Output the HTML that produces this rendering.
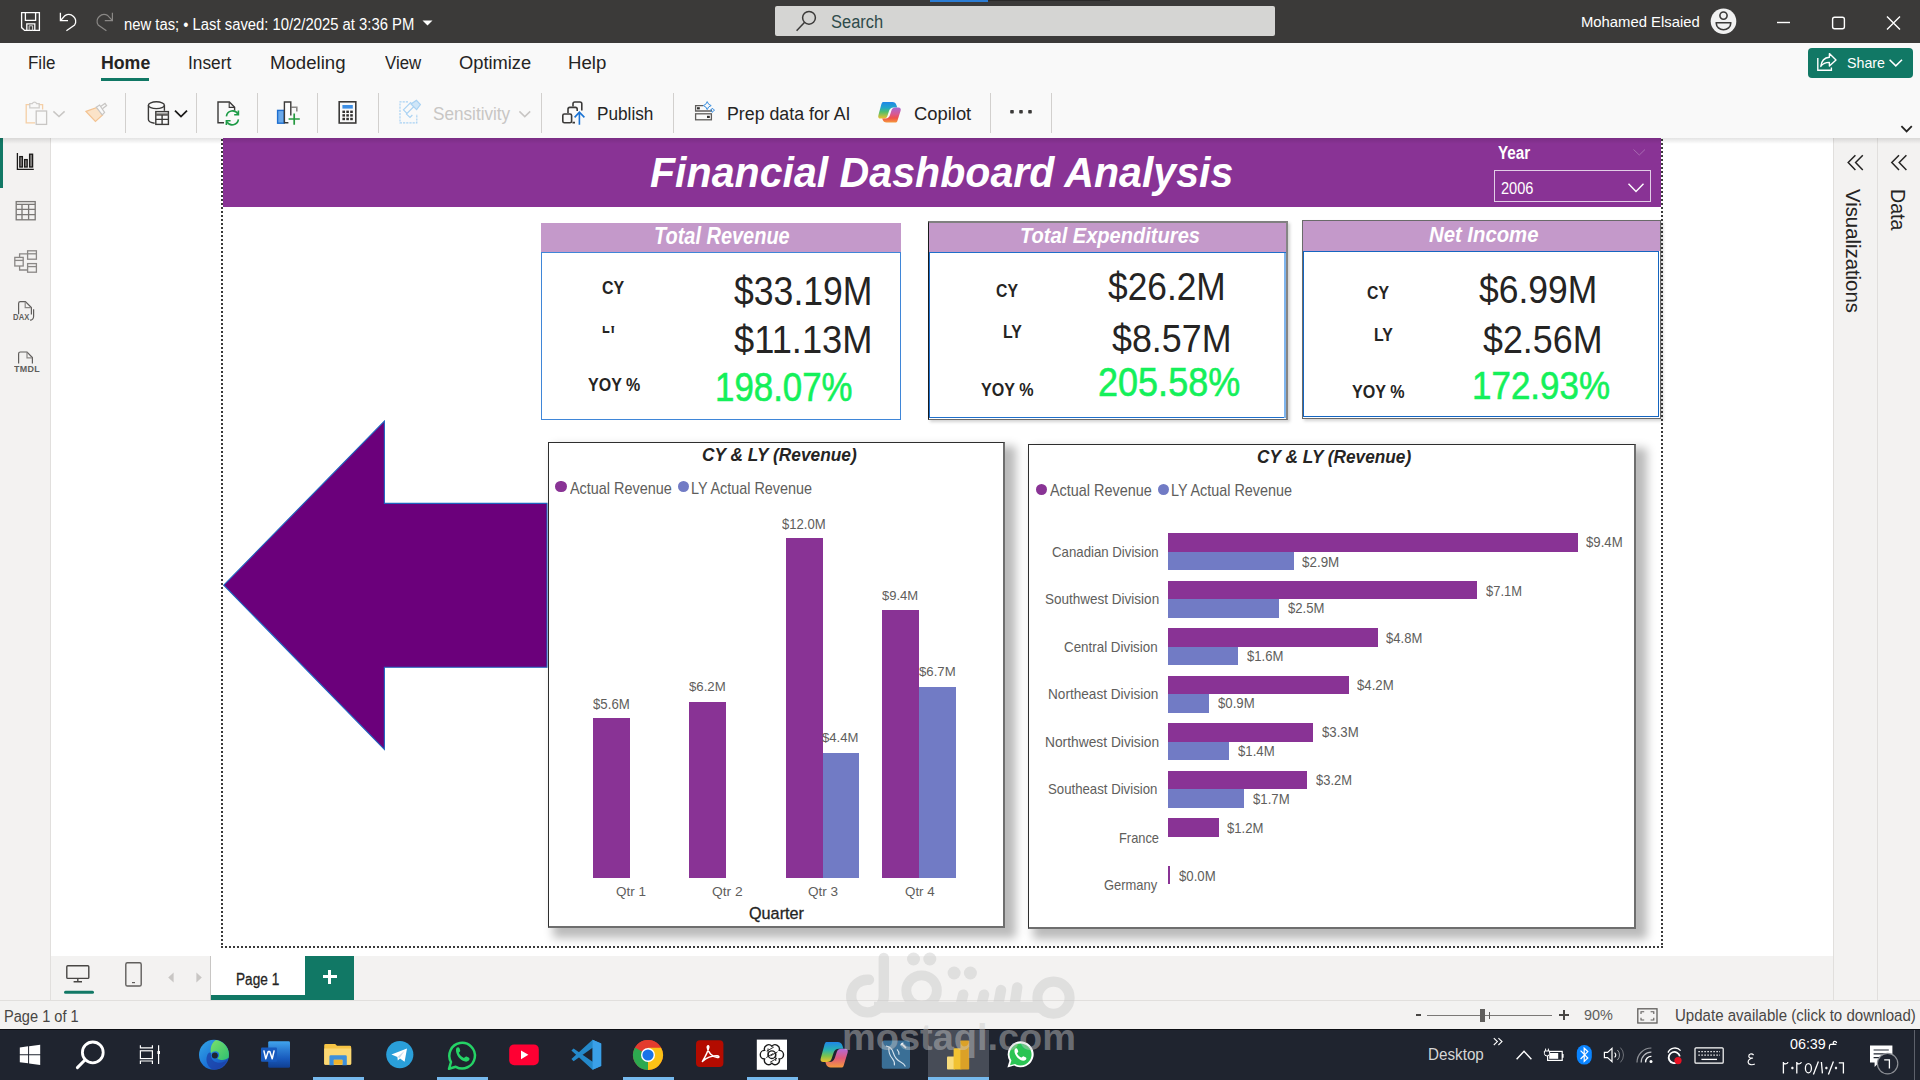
<!DOCTYPE html>
<html lang="en">
<head>
<meta charset="utf-8">
<title>Financial Dashboard Analysis - Power BI Desktop</title>
<style>
html,body{margin:0;padding:0}
body{width:1920px;height:1080px;overflow:hidden;position:relative;background:#fff;font-family:"Liberation Sans",sans-serif}
.a{position:absolute}
.t{position:absolute;white-space:nowrap;line-height:1;transform-origin:0 0;display:block}
svg{position:absolute;overflow:visible}
.sep{position:absolute;top:93px;width:1px;height:40px;background:#d2d0ce}
.bar1{position:absolute;background:#893395}
.bar2{position:absolute;background:#717bc5}
</style>
</head>
<body>

<!-- ===== TITLE BAR ===== -->
<div class="a" id="titlebar" style="left:0;top:0;width:1920px;height:43px;background:#3b3a39"></div>
<div class="a" style="left:930px;top:0;width:58px;height:2px;background:#2b7cd3"></div>
<div class="a" style="left:988px;top:0;width:122px;height:1px;background:#2a2928"></div>
<div class="a" id="searchbox" style="left:775px;top:6px;width:500px;height:30px;background:#d5d5d3;border-radius:2px"></div>
<!--ICONS_TITLE_START--><!-- title bar icons -->
<svg style="left:0;top:0" width="1920" height="43" fill="none" stroke="#fff" stroke-width="1.3">
 <!-- save -->
 <path d="M21.6 12.7 H39.4 V30.4 H24.6 L21.6 27.6 Z"/>
 <path d="M25.4 12.7 V20.3 H35.6 V12.7"/>
 <path d="M26.8 30.4 V23.8 H34.8 V30.4"/>
 <path d="M29.2 30.4 V25.8 H32.6 V30.4" stroke="#d0d0d0" stroke-width="1"/>
 <!-- undo -->
 <path d="M60.4 12.8 V20.6 H68"/>
 <path d="M60.8 20.2 L65 15.6 A6.9 6.9 0 0 1 74.6 25.0 L66.4 30.8"/>
 <!-- redo -->
 <g stroke="#8a8886" stroke-width="1.2">
 <path d="M112.4 12.8 V20.6 H104.8"/>
 <path d="M112 20.2 L107.8 15.6 A6.9 6.9 0 0 0 98.2 25.0 L106.4 30.8"/>
 </g>
 <!-- dropdown caret -->
 <path d="M422.5 20.6 H432.5 L427.5 25.4 Z" fill="#fff" stroke="none"/>
 <!-- search magnifier -->
 <g stroke="#3b3a39" stroke-width="1.5">
 <circle cx="809" cy="17.8" r="6.4"/>
 <path d="M804.4 22.6 L796.6 30.8"/>
 </g>
 <!-- avatar -->
 <circle cx="1723.5" cy="21.3" r="12.8" fill="#f1f1f1" stroke="none"/>
 <g stroke="#3b3a39" stroke-width="1.6">
 <circle cx="1723.5" cy="15.6" r="3.6"/>
 <path d="M1716.3 22.8 H1730.7 V23.6 A7.2 6.2 0 0 1 1716.3 23.6 Z"/>
 </g>
 <!-- window controls -->
 <path d="M1777 22.5 H1790" stroke-width="1.4"/>
 <rect x="1832.6" y="17.2" width="11.8" height="11.6" rx="2" stroke-width="1.4"/>
 <path d="M1887 16.4 L1900 29.6 M1900 16.4 L1887 29.6" stroke-width="1.4"/>
</svg>
<!--ICONS_TITLE_END-->

<!-- ===== MENU + RIBBON ===== -->
<div class="a" id="ribbon" style="left:0;top:43px;width:1920px;height:95px;background:#f9f9f9"></div>
<div class="a" style="left:101px;top:78px;width:48px;height:3px;background:#117865"></div>
<div class="sep" style="left:125px"></div>
<div class="sep" style="left:196px"></div>
<div class="sep" style="left:257px"></div>
<div class="sep" style="left:317px"></div>
<div class="sep" style="left:378px"></div>
<div class="sep" style="left:541px"></div>
<div class="sep" style="left:673px"></div>
<div class="sep" style="left:990px"></div>
<div class="sep" style="left:1051px"></div>
<div class="a" id="share" style="left:1808px;top:48px;width:105px;height:30px;background:#117865;border-radius:4px"></div>
<!--ICONS_RIBBON_START--><!-- ribbon icons -->
<svg style="left:0;top:43px" width="1920" height="95" viewBox="0 43 1920 95" fill="none">
 <!-- share icon + chevron -->
 <g stroke="#fff" stroke-width="1.4">
  <path d="M1817.8 58 V70.2 H1831.4 V67.6"/>
  <path d="M1829.4 53.6 L1836 59.9 L1829.4 66 V62.4 C1825.4 62.4 1822.6 63.8 1820.8 66.4 C1821.4 61 1824.6 57.6 1829.4 57.2 Z" stroke-linejoin="round"/>
  <path d="M1889.6 59.8 L1895.8 65.8 L1902 59.8" stroke-width="1.6"/>
 </g>
 <!-- collapse ribbon chevron -->
 <path d="M1901.4 126.2 L1906.6 131.4 L1911.8 126.2" stroke="#252423" stroke-width="1.8"/>
 <!-- paste (disabled) -->
 <g stroke-width="1.3">
  <path d="M30 104.6 H26.2 V122.8 H35" stroke="#f5cfa6"/>
  <path d="M38.8 104.6 H42.6 V109.6" stroke="#f5cfa6"/>
  <path d="M29.8 107.8 V103.6 H32.4 A2.2 2.2 0 0 1 36.6 103.6 H39.2 V107.8 Z" stroke="#d0cecc"/>
  <rect x="36.2" y="111" width="10.4" height="13.4" stroke="#c8c6c4" fill="#f9f9f9"/>
  <path d="M53.4 111.4 L59 116.6 L64.6 111.4" stroke="#c8c6c4" stroke-width="1.5"/>
 </g>
 <!-- format painter (disabled) -->
 <g stroke-width="1.2">
  <path d="M86 111.4 L97 107.4 L102.6 115 L95.4 121.4 Z" fill="#fbe3c8" stroke="#f3c392"/>
  <path d="M96.2 107.2 L99.6 105 L104.6 112.4 L102.2 114.8 Z" fill="#f9f9f9" stroke="#c8c6c4"/>
  <path d="M100.6 106.4 L105 103.4 L106.6 105.6 L102.4 108.8" stroke="#c8c6c4"/>
 </g>
 <!-- get data -->
 <g stroke="#3b3a39" stroke-width="1.4">
  <ellipse cx="156.4" cy="105.2" rx="8" ry="3.4"/>
  <path d="M148.4 105.2 V119.6 C148.4 121.6 150.8 122.8 154.6 123.2"/>
  <path d="M164.4 105.2 V110.8"/>
  <rect x="155.8" y="111.6" width="12.6" height="12.8" fill="#f9f9f9"/>
  <path d="M155.8 114.6 H168.4" stroke-width="2.4" stroke="#605e5c"/>
  <path d="M155.8 119.4 H168.4 M162.1 115 V124.4"/>
  <path d="M175 110.6 L181 116.6 L187 110.6" stroke="#1b1a19" stroke-width="1.8"/>
 </g>
 <!-- refresh -->
 <g stroke-width="1.4">
  <path d="M224 122.8 H218 V102 H229.4 L234.6 107.2 V110.6" stroke="#3b3a39"/>
  <path d="M229.2 102.2 V107.4 H234.4" stroke="#3b3a39" stroke-width="1.1"/>
  <path d="M226.4 116.4 A6.2 6.2 0 0 1 238 114.2" stroke="#1d9b46" stroke-width="1.6"/>
  <path d="M238.4 110.6 V114.8 H234.2" stroke="#1d9b46" stroke-width="1.6"/>
  <path d="M238.4 119.4 A6.2 6.2 0 0 1 226.8 121.6" stroke="#1d9b46" stroke-width="1.6"/>
  <path d="M226.4 125 V120.8 H230.6" stroke="#1d9b46" stroke-width="1.6"/>
 </g>
 <!-- new visual -->
 <g stroke-width="1.4">
  <rect x="277.6" y="110.4" width="6.6" height="12.8" fill="#6aa9ea" stroke="#1f6fd0"/>
  <path d="M291.4 107.2 H296.8 V111.6" stroke="#8a8886" stroke-width="1.6"/>
  <path d="M288.4 122.8 H284.4 V102 H290.8 V115.6" stroke="#3b3a39" fill="#fdfdfd"/>
  <path d="M288.6 119 H299.8 M294.2 113.4 V124.8" stroke="#25993f" stroke-width="1.7"/>
 </g>
 <!-- calculator -->
 <g>
  <rect x="339.2" y="101.8" width="16.6" height="21.2" stroke="#3b3a39" stroke-width="1.6"/>
  <rect x="342.4" y="105" width="10.4" height="3.6" fill="#3d8ee4"/>
  <g fill="#323130"><rect x="342.4" y="110.6" width="2.6" height="2.4"/><rect x="346.3" y="110.6" width="2.6" height="2.4"/><rect x="350.2" y="110.6" width="2.6" height="2.4"/>
  <rect x="342.4" y="114.2" width="2.6" height="2.4"/><rect x="346.3" y="114.2" width="2.6" height="2.4"/><rect x="350.2" y="114.2" width="2.6" height="2.4"/>
  <rect x="342.4" y="117.8" width="2.6" height="2.4"/><rect x="346.3" y="117.8" width="2.6" height="2.4"/><rect x="350.2" y="117.8" width="2.6" height="2.4"/></g>
 </g>
 <!-- sensitivity (disabled) -->
 <g stroke="#a9d2f3" stroke-width="1.2">
  <path d="M408 101.8 H400 V122.8 H416.8 V114" stroke-dasharray="2.2 1"/>
  <path d="M403.4 109.8 L410.6 102.6 L414.2 106.2 L407 113.4 Z M406 113.6 L410 117.4 L412.4 115" />
  <path d="M411 104 L416.4 100.4 L420.4 104.6 L416.6 109.6 Z" fill="#cfe6f8"/>
  <path d="M519.4 111.4 L524.8 116.6 L530.2 111.4" stroke="#c8c6c4" stroke-width="1.5"/>
 </g>
 <!-- publish -->
 <g stroke="#3b3a39" stroke-width="1.6">
  <path d="M573 106.4 V103.8 A1.8 1.8 0 0 1 574.8 102 H580 A1.8 1.8 0 0 1 581.8 103.8 V110.6"/>
  <path d="M568 113 V109.2 A1.8 1.8 0 0 1 569.8 107.4 H575.4 A1.8 1.8 0 0 1 577.2 109.2 V111 M575 122.6 H572.4"/>
  <rect x="562.8" y="114" width="8.8" height="8.8" rx="1.6"/>
  <path d="M579.4 124.8 V112.4 M574.6 117.4 L579.4 112.2 L584.4 117.4" stroke="#1a73d4" stroke-width="1.6"/>
 </g>
 <!-- prep data for AI -->
 <g stroke="#605e5c" stroke-width="1.3">
  <path d="M703 105.6 H695.6 V111 H711.4 V109.6"/>
  <rect x="695.6" y="113.8" width="15.8" height="6"/>
  <rect x="697" y="107.2" width="2.8" height="2.2" fill="#323130" stroke="none"/>
  <rect x="707" y="115.8" width="2.8" height="2.2" fill="#323130" stroke="none"/>
  <path d="M707.2 101.6 L708.6 104.2 L711.2 105.6 L708.6 107 L707.2 109.6 L705.8 107 L703.2 105.6 L705.8 104.2 Z" stroke="#3a8fe0" stroke-width="1"/>
  <path d="M712.4 108 L713.2 109.4 L714.6 110.2 L713.2 111 L712.4 112.4 L711.6 111 L710.2 110.2 L711.6 109.4 Z" stroke="#3a8fe0" stroke-width="0.9"/>
 </g>
 <!-- copilot -->
 <defs>
  <linearGradient id="cpa" x1="0" y1="0" x2="0" y2="1"><stop offset="0" stop-color="#1f86e8"/><stop offset="0.35" stop-color="#22a7c8"/><stop offset="0.6" stop-color="#4fbf6b"/><stop offset="1" stop-color="#f2c02c"/></linearGradient>
  <linearGradient id="cpb" x1="0" y1="0" x2="0" y2="1"><stop offset="0" stop-color="#a768d6"/><stop offset="0.45" stop-color="#d9588f"/><stop offset="0.7" stop-color="#f0524a"/><stop offset="1" stop-color="#f59b3c"/></linearGradient>
 </defs>
 <path d="M883 102 H892.4 C894.6 102 895.8 103.2 896.4 105 L897.2 107.6 H893.4 C891 107.6 889.8 108.8 889 111 L887.4 116 C886.8 117.8 885.6 118.6 883.6 118.6 H880.6 C878.6 118.6 877.8 117.2 878.4 115.2 L881 105.6 C881.6 103.2 882.2 102 883 102 Z" fill="url(#cpa)"/>
 <path d="M896 122.6 H886.6 C884.4 122.6 883.2 121.4 882.6 119.6 L882.2 118.4 H885.6 C888 118.4 889.2 117.2 890 115 L891.6 110 C892.2 108.2 893.4 107.4 895.4 107.4 H898.4 C900.4 107.4 901.2 108.8 900.6 110.8 L898 119 C897.4 121.4 896.8 122.6 896 122.6 Z" fill="url(#cpb)"/>
 <!-- more dots -->
 <g fill="#3b3a39"><rect x="1010.2" y="110" width="3.6" height="3.6" rx="0.8"/><rect x="1019.2" y="110" width="3.6" height="3.6" rx="0.8"/><rect x="1028.2" y="110" width="3.6" height="3.6" rx="0.8"/></g>
</svg>
<!--ICONS_RIBBON_END-->

<!-- ===== WORK AREA ===== -->
<div class="a" id="leftnav" style="left:0;top:138px;width:50px;height:891px;background:#f3f2f1;border-right:1px solid #e1dfdd"></div>
<div class="a" style="left:0;top:138px;width:3px;height:50px;background:#117865"></div>
<div class="a" id="rightpanes" style="left:1833px;top:138px;width:87px;height:862px;background:#f3f2f1;border-left:1px solid #e1dfdd;box-sizing:border-box"></div>
<div class="a" style="left:1877px;top:138px;width:1px;height:862px;background:#e1dfdd"></div>
<!--ICONS_NAV_START--><!-- left nav icons -->
<svg style="left:0;top:138px" width="50" height="260" viewBox="0 138 50 260" fill="none">
 <g stroke="#1b1a19" stroke-width="1.3">
  <path d="M17.4 153 V169.4 H33.8"/>
  <rect x="19.8" y="156.6" width="2.6" height="10.4" fill="#8a8886"/>
  <rect x="24.6" y="159.6" width="2.6" height="7.4" fill="#8a8886"/>
  <rect x="29.6" y="154.2" width="3" height="12.8" fill="#8a8886"/>
 </g>
 <g stroke="#7a7876" stroke-width="1.3">
  <rect x="16.2" y="201.6" width="19" height="18.2"/>
  <path d="M16.2 204.4 H35.2 M16.2 209.4 H35.2 M16.2 214.6 H35.2 M22 204.4 V219.8 M28.6 204.4 V219.8"/>
 </g>
 <g stroke="#8a8886" stroke-width="1.3">
  <rect x="14.8" y="257.4" width="8.4" height="8.6"/><path d="M14.8 260.4 H23.2"/>
  <rect x="27.6" y="250.8" width="8.8" height="8.4"/><path d="M27.6 253.8 H36.4"/>
  <rect x="27.6" y="263.6" width="8.8" height="8.6"/><path d="M27.6 266.6 H36.4"/>
  <path d="M19.6 257.4 V253.8 H27.6 M19.6 266 V270 H27.6"/>
 </g>
 <g stroke="#605e5c" stroke-width="1.2">
  <path d="M18.6 314.2 V303.4 A1.8 1.8 0 0 1 20.4 301.6 H25.4 L31.4 307.6 V314.6"/>
  <path d="M25.2 301.8 V307.6 H31.2" stroke="#8a8886"/>
  <path d="M33.6 309.2 V316.4 A3.6 3.6 0 0 1 30 320.2"/>
  <path d="M18.6 363.6 V353.8 A1.8 1.8 0 0 1 20.4 352 H27 L32.4 357.6 V363.6"/>
  <path d="M27 352.2 V357.8 H32.2" stroke="#8a8886"/>
 </g>
</svg>
<span class="t" style="left:12.9px;top:314.4px;font-size:8.2px;font-weight:700;color:#605e5c;transform:scaleX(0.93);letter-spacing:0.2px">DAX</span>
<span class="t" style="left:13.8px;top:363.7px;font-size:9.6px;font-weight:700;color:#605e5c;transform:scaleX(0.93);letter-spacing:0.3px">TMDL</span>
<!-- right pane -->
<svg style="left:1833px;top:138px" width="87" height="60" viewBox="1833 138 87 60" fill="none" stroke="#252423" stroke-width="1.5">
 <path d="M1855.4 155.2 L1848.2 162.6 L1855.4 170 M1862.8 155.2 L1855.6 162.6 L1862.8 170"/>
 <path d="M1899 155.2 L1891.8 162.6 L1899 170 M1906.4 155.2 L1899.2 162.6 L1906.4 170"/>
</svg>
<span class="t" style="left:1861.9px;top:189px;font-size:19.6px;color:#252423;transform:rotate(90deg) scaleX(1.037)">Visualizations</span>
<span class="t" style="left:1906.6px;top:189.4px;font-size:19.6px;color:#252423;transform:rotate(90deg) scaleX(1.0)">Data</span>
<!--ICONS_NAV_END-->

<!-- report page dotted frame -->
<div class="a" style="left:221px;top:139px;width:2px;height:808px;background:repeating-linear-gradient(#3a3a3a 0 2px,rgba(255,255,255,0) 2px 4px)"></div>
<div class="a" style="left:1661px;top:139px;width:2px;height:808px;background:repeating-linear-gradient(#3a3a3a 0 2px,rgba(255,255,255,0) 2px 4px)"></div>
<div class="a" style="left:221px;top:946px;width:1442px;height:2px;background:repeating-linear-gradient(90deg,#3a3a3a 0 2px,rgba(255,255,255,0) 2px 4px)"></div>

<!-- purple header -->
<div class="a" id="hdr" style="left:223px;top:138px;width:1438px;height:69px;background:#893395"></div>
<div class="a" style="left:1494px;top:170px;width:155px;height:30px;border:1px solid #e2cde6;box-sizing:content-box"></div>
<svg style="left:1628px;top:183px" width="16" height="10"><path d="M0.5 0.8 L8 8.6 L15.5 0.8" fill="none" stroke="#fff" stroke-width="1.4"/></svg>
<svg style="left:1633px;top:149px" width="13" height="7"><path d="M0.5 0.5 L6.3 6 L12 0.5" fill="none" stroke="#a86ab1" stroke-width="1"/></svg>

<!-- cards -->
<div class="a" style="left:541px;top:223px;width:360px;height:30px;background:#c499ca"></div>
<div class="a" style="left:541px;top:252px;width:360px;height:168px;border:1px solid #3f86d8;box-sizing:border-box;background:#fff"></div>

<div class="a" style="left:928px;top:221px;width:360px;height:199px;background:#fff;box-shadow:2px 2px 3px rgba(0,0,0,0.18)"></div>
<div class="a" style="left:928px;top:221px;width:360px;height:31px;background:#c499ca"></div>
<div class="a" style="left:929px;top:252px;width:357px;height:166px;border:1px solid #1f6fca;box-sizing:border-box"></div>
<div class="a" style="left:1284px;top:253px;width:2px;height:165px;background:#7fb5ee"></div>
<div class="a" style="left:928px;top:221px;width:360px;height:199px;box-sizing:border-box;border:1px solid #6a6a6a;border-top:2px solid #808080;border-right:2px solid #858585;border-left:1px solid #1a1a1a"></div>

<div class="a" style="left:1302px;top:220px;width:359px;height:199px;background:#fff;box-shadow:2px 2px 3px rgba(0,0,0,0.18)"></div>
<div class="a" style="left:1302px;top:220px;width:359px;height:31px;background:#c499ca"></div>
<div class="a" style="left:1303px;top:251px;width:356px;height:166px;border:1px solid #1565c0;box-sizing:border-box"></div>
<div class="a" style="left:1302px;top:220px;width:359px;height:199px;box-sizing:border-box;border:1px solid #6a6a6a"></div>

<!-- arrow shape -->
<svg style="left:0;top:0" width="1920" height="1080"><polygon points="223.75,585.2 384.4,421 384.4,503.4 547,503.4 547,667.2 384.4,667.2 384.4,749.4" fill="#6b007b" stroke="#1f66c0" stroke-width="1.1"/></svg>

<!-- chart 1 -->
<div class="a" style="left:548px;top:442px;width:457px;height:486px;box-sizing:border-box;border:1px solid #2e2e2e;border-right:2px solid #6e6e6e;border-bottom:2px solid #6e6e6e;background:#fff;box-shadow:8px 7px 9px 3px rgba(0,0,0,0.27)"></div>
<div class="a" style="left:555.3px;top:481.1px;width:11.3px;height:11.3px;border-radius:50%;background:#893395"></div>
<div class="a" style="left:677.5px;top:481.1px;width:11.3px;height:11.3px;border-radius:50%;background:#717bc5"></div>
<div class="bar1" style="left:593px;top:718.25px;width:37.00px;height:159.25px"></div>
<div class="bar1" style="left:689.25px;top:701.75px;width:37.00px;height:175.75px"></div>
<div class="bar1" style="left:785.5px;top:538px;width:37.00px;height:339.50px"></div>
<div class="bar2" style="left:822.5px;top:752.5px;width:36.75px;height:125.00px"></div>
<div class="bar1" style="left:882px;top:610px;width:36.75px;height:267.50px"></div>
<div class="bar2" style="left:918.75px;top:687px;width:37.00px;height:190.50px"></div>
<!-- chart 2 -->
<div class="a" style="left:1028px;top:444px;width:608px;height:485px;box-sizing:border-box;border:1px solid #2e2e2e;border-right:2px solid #6e6e6e;border-bottom:2px solid #6e6e6e;background:#fff;box-shadow:8px 7px 9px 3px rgba(0,0,0,0.27)"></div>
<div class="a" style="left:1035.5px;top:483.8px;width:11.3px;height:11.3px;border-radius:50%;background:#893395"></div>
<div class="a" style="left:1157.7px;top:483.8px;width:11.3px;height:11.3px;border-radius:50%;background:#717bc5"></div>
<div class="bar1" style="left:1168px;top:533.25px;width:410.00px;height:18.60px"></div>
<div class="bar2" style="left:1168px;top:551.85px;width:126.00px;height:18.60px"></div>
<div class="bar1" style="left:1168px;top:580.75px;width:309.00px;height:18.60px"></div>
<div class="bar2" style="left:1168px;top:599.35px;width:110.75px;height:18.60px"></div>
<div class="bar1" style="left:1168px;top:628.25px;width:210.00px;height:18.60px"></div>
<div class="bar2" style="left:1168px;top:646.85px;width:70.25px;height:18.60px"></div>
<div class="bar1" style="left:1168px;top:675.75px;width:180.75px;height:18.60px"></div>
<div class="bar2" style="left:1168px;top:694.35px;width:40.75px;height:18.60px"></div>
<div class="bar1" style="left:1168px;top:723.25px;width:144.50px;height:18.60px"></div>
<div class="bar2" style="left:1168px;top:741.85px;width:60.75px;height:18.60px"></div>
<div class="bar1" style="left:1168px;top:770.75px;width:139.00px;height:18.60px"></div>
<div class="bar2" style="left:1168px;top:789.35px;width:76.00px;height:18.60px"></div>
<div class="bar1" style="left:1168px;top:818.25px;width:50.75px;height:18.60px"></div>
<div class="bar1" style="left:1168px;top:865.75px;width:2.00px;height:18.60px"></div>


<!-- ===== BOTTOM TABS / STATUS ===== -->
<div class="a" id="tabrow" style="left:51px;top:956px;width:1782px;height:44px;background:#f3f2f1"></div>
<div class="a" style="left:0;top:1000px;width:1920px;height:29px;background:#f3f2f1;border-top:1px solid #e1dfdd;box-sizing:border-box"></div>
<!--BOTTOM_START--><!-- bottom tabs -->
<svg style="left:51px;top:956px" width="320" height="44" viewBox="51 956 320 44" fill="none">
 <g stroke="#484644" stroke-width="1.4">
  <rect x="66.8" y="965.8" width="22" height="12.6" rx="1"/>
  <path d="M77.8 978.4 V981.6 M73.6 981.8 H82"/>
 </g>
 <rect x="64" y="990.8" width="30" height="3" rx="1.5" fill="#117865"/>
 <g stroke="#605e5c" stroke-width="1.4">
  <rect x="125.8" y="962.8" width="15.4" height="23.2" rx="1.6"/>
  <path d="M132 982.6 H135" stroke-width="1.2"/>
 </g>
 <path d="M173.6 972.6 V982.4 L168.2 977.5 Z" fill="#c8c6c4"/>
 <path d="M196.4 972.6 V982.4 L201.8 977.5 Z" fill="#c8c6c4"/>
</svg>
<div class="a" style="left:210px;top:956px;width:95px;height:44px;background:#fff;border-left:1px solid #c8c6c4;box-sizing:border-box"></div>
<div class="a" style="left:211px;top:995px;width:94px;height:5px;background:#117865"></div>
<div class="a" style="left:305px;top:956px;width:49px;height:44px;background:#117865"></div>
<div class="a" style="left:322.5px;top:974.9px;width:14px;height:3.2px;background:#fff"></div>
<div class="a" style="left:327.9px;top:969.5px;width:3.2px;height:14px;background:#fff"></div>
<!-- status bar zoom controls -->
<div class="a" style="left:1415.5px;top:1014.2px;width:5.5px;height:1.6px;background:#484644"></div>
<div class="a" style="left:1427px;top:1015px;width:125px;height:1px;background:#7a7876"></div>
<div class="a" style="left:1480.4px;top:1009px;width:4.6px;height:12.6px;background:#605e5c"></div>
<div class="a" style="left:1489px;top:1011.8px;width:1px;height:7.2px;background:#605e5c"></div>
<div class="a" style="left:1559px;top:1014.4px;width:9.6px;height:1.6px;background:#484644"></div>
<div class="a" style="left:1563px;top:1010.4px;width:1.6px;height:9.6px;background:#484644"></div>
<svg style="left:1637px;top:1008px" width="21" height="16" viewBox="1637 1008 21 16" fill="none" stroke="#605e5c" stroke-width="1.3">
 <rect x="1637.8" y="1008.8" width="19.2" height="14.2"/>
 <path d="M1641 1014 V1011.8 H1644.2 M1650.6 1011.8 H1653.8 V1014 M1641 1017.8 V1020 H1644.2 M1650.6 1020 H1653.8 V1017.8" stroke-width="1.1"/>
</svg>
<!--BOTTOM_END-->

<!-- ===== TASKBAR ===== -->
<div class="a" id="taskbar" style="left:0;top:1029px;width:1920px;height:51px;background:#1f242f"></div>
<!--TASKBAR_START--><!-- taskbar content -->
<div class="a" style="left:0;top:1029px;width:1920px;height:1px;background:#0c0e13"></div>
<div class="a" style="left:928px;top:1030px;width:61px;height:50px;background:#474c57"></div>
<div class="a" style="left:313px;top:1077px;width:51px;height:3px;background:#76b9ed"></div>
<div class="a" style="left:437px;top:1077px;width:51px;height:3px;background:#76b9ed"></div>
<div class="a" style="left:623px;top:1077px;width:51px;height:3px;background:#76b9ed"></div>
<div class="a" style="left:747px;top:1077px;width:51px;height:3px;background:#76b9ed"></div>
<div class="a" style="left:928px;top:1077px;width:61px;height:3px;background:#76b9ed"></div>
<div class="a" style="left:1914px;top:1030px;width:1px;height:50px;background:#5d616b"></div>
<svg style="left:0;top:1029px" width="1920" height="51" viewBox="0 1029 1920 51" fill="none">
 <defs>
  <linearGradient id="edg" x1="0" y1="0" x2="1" y2="1"><stop offset="0" stop-color="#35a8e6"/><stop offset="0.55" stop-color="#1b74d8"/><stop offset="1" stop-color="#1a3fa8"/></linearGradient>
  <linearGradient id="edg2" x1="0" y1="0" x2="1" y2="1"><stop offset="0" stop-color="#7be06a"/><stop offset="1" stop-color="#2fbf71"/></linearGradient>
  <linearGradient id="wrd" x1="0" y1="0" x2="0" y2="1"><stop offset="0" stop-color="#41a5ee"/><stop offset="0.33" stop-color="#2b7cd3"/><stop offset="0.66" stop-color="#185abd"/><stop offset="1" stop-color="#103f91"/></linearGradient>
  <linearGradient id="cpt" x1="0" y1="0" x2="0" y2="1"><stop offset="0" stop-color="#1f86e8"/><stop offset="0.4" stop-color="#29b3b0"/><stop offset="0.7" stop-color="#7cc34c"/><stop offset="1" stop-color="#f2c02c"/></linearGradient>
  <linearGradient id="cpt2" x1="0" y1="0" x2="0" y2="1"><stop offset="0" stop-color="#b06ad8"/><stop offset="0.5" stop-color="#e05a7a"/><stop offset="1" stop-color="#f59b3c"/></linearGradient>
  <linearGradient id="pbi" x1="0" y1="0" x2="1" y2="0"><stop offset="0" stop-color="#f7d66a"/><stop offset="1" stop-color="#e6a91f"/></linearGradient>
 </defs>
 <!-- windows -->
 <path d="M19.8 1047.4 L28.1 1046.3 V1054.2 H19.8 Z M29.1 1046.2 L40.2 1044.8 V1054.2 H29.1 Z M19.8 1055.3 H28.1 V1063.3 L19.8 1062.3 Z M29.1 1055.3 H40.2 V1065.1 L29.1 1063.5 Z" fill="#fff"/>
 <!-- search -->
 <circle cx="92.8" cy="1052.4" r="10.4" stroke="#fff" stroke-width="2.8"/>
 <path d="M85.2 1059.8 L77.4 1067.6" stroke="#fff" stroke-width="3" stroke-linecap="round"/>
 <!-- task view -->
 <g stroke="#fff" stroke-width="1.2">
  <rect x="140.4" y="1050.8" width="12" height="7.8"/>
  <path d="M140.4 1045.2 V1047.9 H152.4 V1045.2 M140.4 1064 V1061 H152.4 V1064 M158.6 1045.2 V1064"/>
  <rect x="157.4" y="1051" width="2.6" height="3" fill="#fff" stroke="none"/>
 </g>
 <!-- edge -->
 <circle cx="214" cy="1054.8" r="15" fill="url(#edg)"/>
 <path d="M216 1040 A15 15 0 0 1 228.8 1057.4 C226 1060.4 220 1060.6 217.4 1058.4 C219.4 1057 219.8 1054.4 218.4 1052.6 C216.4 1050.4 212.4 1051 211 1053.6 C209.8 1047.4 212 1042.4 216 1040 Z" fill="url(#edg2)"/>
 <path d="M211 1053.4 C210.4 1057.4 212.6 1061 216.4 1062.2 C220 1063.4 224.4 1062.4 227 1060 C224.6 1066 219 1069.8 213.4 1069.8 C207.8 1067.4 205 1060.8 207.2 1055.2 C208.4 1052.4 210.2 1051.6 211 1053.4 Z" fill="#1d3fa6" opacity="0.75"/>
 <circle cx="214.8" cy="1055.4" r="3" fill="#1f2430"/>
 <!-- word -->
 <rect x="268.2" y="1041.2" width="21.8" height="26.6" rx="1.4" fill="url(#wrd)"/>
 <rect x="261" y="1047.4" width="16" height="14.4" rx="1" fill="#185abd"/>
 <path d="M263.8 1050.4 L265.8 1058.8 L268.2 1051.6 H269.8 L272.2 1058.8 L274.2 1050.4" stroke="#fff" stroke-width="1.5" stroke-linejoin="round"/>
 <!-- explorer -->
 <path d="M324.2 1045.4 A1.4 1.4 0 0 1 325.6 1044 H335.2 L337 1045.8 H349.8 A1.4 1.4 0 0 1 351.2 1047.2 V1063.4 A1.4 1.4 0 0 1 349.8 1064.8 H325.6 A1.4 1.4 0 0 1 324.2 1063.4 Z" fill="#f6c445"/>
 <path d="M324.2 1048.6 H351.2 V1063.4 A1.4 1.4 0 0 1 349.8 1064.8 H325.6 A1.4 1.4 0 0 1 324.2 1063.4 Z" fill="#fbd874"/>
 <path d="M329.4 1065.2 V1056.6 A1.4 1.4 0 0 1 330.8 1055.2 H345.4 A1.4 1.4 0 0 1 346.8 1056.6 V1065.2 H342.4 V1059.8 H333.8 V1065.2 Z" fill="#3d8fdb"/>
 <rect x="333.8" y="1059.8" width="8.6" height="4.6" fill="#f2b32a"/>
 <!-- telegram -->
 <circle cx="399.8" cy="1054.6" r="13.6" fill="#2a9fd9"/>
 <path d="M391.4 1054.6 L407 1048.4 L404.6 1061.8 L400 1058.4 L397.8 1060.6 L397.4 1057 Z" fill="#fff"/>
 <path d="M397.4 1057 L404.6 1050.8 L399.6 1058" fill="#c8daea"/>
 <!-- whatsapp outline -->
 <path d="M449 1068.8 L451 1062 A12.8 12.8 0 1 1 455.8 1066.8 Z" stroke="#25d366" stroke-width="2.5" stroke-linejoin="round"/>
 <path d="M456.6 1047.8 C457.8 1046.6 459.2 1047.2 459.6 1048.6 L460.2 1050.6 C460.4 1051.6 459.4 1052.2 458.8 1052.8 C459.8 1055.2 461.8 1057 464 1058 C464.8 1057.2 465.6 1056.2 466.6 1056.6 L468.6 1057.6 C469.8 1058.2 469.8 1059.6 468.8 1060.6 C466.4 1063 462.4 1061 459.8 1058.6 C457.2 1056 454.8 1050.8 456.6 1047.8 Z" fill="#25d366"/>
 <!-- youtube -->
 <rect x="509.2" y="1044.4" width="29.6" height="20.8" rx="5" fill="#ff0033"/>
 <path d="M521 1050.4 L528.4 1054.8 L521 1059.2 Z" fill="#fff"/>
 <!-- vscode -->
 <path d="M592.6 1039.8 L601.2 1043.6 V1066 L592.6 1069.8 L571.4 1050.6 L573.6 1048.4 L592.6 1061.8 V1047.8 L573.6 1061.2 L571.4 1059 Z" fill="#2489ca"/>
 <path d="M592.6 1039.8 L601.2 1043.6 V1066 L592.6 1069.8 Z" fill="#3aa0e8"/>
 <!-- chrome -->
 <circle cx="648" cy="1055" r="15" fill="#e33b2e"/>
 <path d="M648 1055 L635 1047.5 A15 15 0 0 0 648 1070 Z" fill="#2da94f"/>
 <path d="M648 1055 L648 1070 A15 15 0 0 0 661 1047.5 L648 1047.5 Z" fill="#fbc116"/>
 <path d="M635 1047.5 A15 15 0 0 1 661 1047.5 L648 1047.5 Z" fill="#e33b2e"/>
 <path d="M648 1055 L641 1059 L648 1070 Z" fill="#2da94f"/>
 <circle cx="648" cy="1055" r="7" fill="#fff"/>
 <circle cx="648" cy="1055" r="5.6" fill="#1a73e8"/>
 <!-- acrobat -->
 <rect x="696" y="1040.2" width="27.4" height="26.8" rx="4" fill="#b30b00"/>
 <path d="M702.4 1061.4 C704.6 1057.8 707.8 1052.6 708.8 1047.4 C709.2 1045.4 707.2 1045.2 707.2 1047.2 C707.4 1051.8 712.4 1057 717.4 1057.6 C719.6 1057.8 719.4 1055.8 717.2 1055.8 C712.4 1055.8 706.2 1058 702.4 1061.4 Z" stroke="#fff" stroke-width="1.5" stroke-linejoin="round"/>
 <!-- chatgpt -->
 <rect x="756.8" y="1039.6" width="30.2" height="30.2" fill="#fff"/>
 <g stroke="#1a1a1a" stroke-width="1.7" transform="translate(771.9 1054.7) scale(0.82) translate(-771.9 -1054.7)">
  <circle cx="771.9" cy="1054.7" r="4.6"/>
  <path d="M771.9 1044.4 A5.2 5.2 0 0 1 780.8 1049.4 A5.2 5.2 0 0 1 780.8 1060 A5.2 5.2 0 0 1 771.9 1065 A5.2 5.2 0 0 1 763 1060 A5.2 5.2 0 0 1 763 1049.4 A5.2 5.2 0 0 1 771.9 1044.4 Z"/>
  <path d="M767.2 1047 V1057 M776.6 1062.4 V1052.4 M765 1058.2 L773.6 1053.2 M778.8 1051.2 L770.2 1056.2 M769.6 1064 L778.2 1059 M774.2 1045.4 L765.6 1050.4" stroke-width="1.1"/>
 </g>
 <!-- copilot (taskbar) -->
 <path d="M826.4 1042 H837.6 C840.2 1042 841.6 1043.4 842.4 1045.6 L843.4 1048.8 H838.8 C836 1048.8 834.6 1050.2 833.6 1052.8 L831.6 1058.8 C830.8 1061 829.4 1062 827 1062 H823.4 C821 1062 820 1060.4 820.8 1058 L824 1046.4 C824.6 1043.6 825.4 1042 826.4 1042 Z" fill="url(#cpt)"/>
 <path d="M842 1067.6 H830.8 C828.2 1067.6 826.8 1066.2 826 1064 L825.4 1062 H829.6 C832.4 1062 833.8 1060.6 834.8 1058 L836.8 1052 C837.6 1049.8 839 1048.8 841.4 1048.8 H845 C847.4 1048.8 848.4 1050.4 847.6 1052.8 L844.4 1063.2 C843.8 1066 843 1067.6 842 1067.6 Z" fill="url(#cpt2)"/>
 <!-- mysql workbench -->
 <rect x="881.8" y="1040.6" width="28.2" height="28.2" rx="2.6" fill="#3a6f96"/>
 <path d="M886 1046 C890 1046.6 892.4 1049.4 893.4 1053 C894.6 1057.2 897.4 1060.6 901.4 1062.4 C903 1063.2 904.6 1064.8 905.4 1066.4 M889 1046.8 C888.4 1051 889.6 1055.4 892.4 1058.6 C894 1060.4 894.8 1063 894.4 1065.4 M897 1049.4 C898.4 1050.8 899.2 1052.8 899 1054.8" stroke="#d6e4ee" stroke-width="1.1"/>
 <path d="M901.6 1043.6 L906 1048 M903.4 1043.2 A2 2 0 0 0 901.2 1045.4" stroke="#e8eef2" stroke-width="1.6"/>
 <!-- power bi -->
 <rect x="947" y="1056.4" width="8" height="13.2" rx="0.8" fill="#f8dc7c"/>
 <rect x="953.6" y="1048.2" width="8" height="21.4" rx="0.8" fill="#f1c232"/>
 <rect x="960.4" y="1040.4" width="8.8" height="29.2" rx="0.8" fill="#dba127"/>
 <!-- whatsapp filled -->
 <path d="M1007.4 1067.6 L1009.4 1060.8 A13 13 0 1 1 1014.2 1065.6 Z" fill="#fff"/>
 <path d="M1010 1065.2 L1011.4 1060.6 A11 11 0 1 1 1015 1064 Z" fill="#2bc454"/>
 <path d="M1015 1048.8 C1016 1047.8 1017.2 1048.2 1017.6 1049.4 L1018.2 1051.2 C1018.4 1052 1017.6 1052.6 1017 1053.2 C1017.8 1055.2 1019.6 1056.8 1021.6 1057.6 C1022.2 1057 1023 1056 1023.8 1056.4 L1025.6 1057.2 C1026.6 1057.8 1026.6 1059 1025.8 1059.8 C1023.6 1062 1020.2 1060.2 1017.8 1058 C1015.6 1055.8 1013.4 1051.4 1015 1048.8 Z" fill="#fff"/>
 <!-- tray -->
 <g stroke="#fff" stroke-width="1.2">
  <path d="M1493.8 1038.2 L1497.4 1041.6 L1493.8 1045 M1498.4 1038.2 L1502 1041.6 L1498.4 1045" stroke-width="1.1"/>
  <path d="M1516.6 1059.2 L1524 1051.2 L1531.4 1059.2" stroke-width="1.4"/>
  <!-- battery -->
  <rect x="1547.6" y="1051.4" width="14.6" height="9" />
  <path d="M1562.8 1054 V1057.8" stroke-width="1.6"/>
  <rect x="1549.2" y="1053" width="9" height="5.8" fill="#fff" stroke="none"/>
  <path d="M1545.6 1048.6 V1051 M1548.4 1048.6 V1051 M1544.4 1051 H1549.6 V1053.4 A2.6 2.6 0 0 1 1544.4 1053.4 Z" stroke-width="1" fill="#1f2430"/>
  <!-- volume -->
  <path d="M1604.4 1052.4 H1607.6 L1612 1048.4 V1061.6 L1607.6 1057.6 H1604.4 Z" stroke-width="1.2"/>
  <path d="M1614.6 1052.6 A3.4 3.4 0 0 1 1614.6 1057.4" stroke-width="1.1"/>
  <path d="M1617.4 1050 A7 7 0 0 1 1617.4 1060" stroke="#9a9da3" stroke-width="1"/>
  <path d="M1620.4 1047.6 A10.4 10.4 0 0 1 1620.4 1062.4" stroke="#6e7178" stroke-width="1"/>
  <!-- wifi -->
  <circle cx="1651" cy="1061.4" r="1.5" fill="#fff" stroke="none"/>
  <path d="M1645.6 1062.4 A5.6 5.6 0 0 1 1651.4 1056.4" stroke-width="1.4"/>
  <path d="M1641.2 1062.4 A10 10 0 0 1 1651.4 1052.2" stroke="#b9bbc0" stroke-width="1.3"/>
  <path d="M1637 1062.4 A14.4 14.4 0 0 1 1651.4 1048" stroke="#8e9197" stroke-width="1.2"/>
  <!-- sync -->
  <path d="M1668 1052.6 A7.6 7.6 0 0 1 1680.6 1050.6" stroke-width="1.4"/>
  <path d="M1677.4 1062.2 A5.6 5.6 0 1 1 1679.8 1056.4" stroke-width="1.8"/>
  <circle cx="1678" cy="1060.6" r="3.6" fill="#e81123" stroke="none"/>
  <!-- keyboard -->
  <rect x="1695" y="1047.8" width="28.2" height="15.4" rx="1" stroke-width="1.2"/>
  <path d="M1698.4 1051.6 H1720 M1698.4 1055.2 H1720" stroke-width="1.2" stroke-dasharray="1.4 1.6"/>
  <path d="M1701.4 1059.4 H1717" stroke-width="1.3"/>
  <!-- arabic ain -->
  <path d="M1753.6 1055 C1751.6 1053 1748.6 1054 1748.8 1056.4 C1749 1058 1751 1058.4 1753 1058 C1750 1058.6 1747.8 1060.4 1748.2 1062.6 C1748.8 1065 1752.4 1065.2 1754.8 1064" stroke-width="1.2"/>
  <!-- arabic meem after time -->
  <path d="M1836.6 1043 C1836.6 1041 1833.6 1040.6 1833.2 1042.6 C1833 1044 1834.4 1044.6 1836.4 1044.4 H1830.6 C1829.4 1044.6 1829.2 1046.6 1829.4 1049.4" stroke-width="1.2"/>
  <!-- arabic date digits (approx) -->
  <g stroke-width="1.3">
   <path d="M1783.2 1062.4 C1784 1064.4 1787.4 1064.4 1788 1062.2 M1783.4 1062 V1073.4"/>
   <path d="M1792.4 1066.8 L1793.4 1068 L1792.4 1069.2 L1791.4 1068 Z" fill="#fff" stroke-width="0.8"/>
   <path d="M1796.6 1062.4 C1797.4 1064.4 1800.8 1064.4 1801.4 1062.2 M1796.8 1062 V1073.4"/>
   <ellipse cx="1808.4" cy="1068.2" rx="3" ry="4.6"/>
   <path d="M1818.4 1061.4 L1813.4 1074.4"/>
   <path d="M1821.4 1062 L1822.4 1073.4"/>
   <path d="M1826.4 1066.8 L1827.4 1068 L1826.4 1069.2 L1825.4 1068 Z" fill="#fff" stroke-width="0.8"/>
   <path d="M1833.4 1061.4 L1828.4 1074.4"/>
   <path d="M1836 1066.8 L1837 1068 L1836 1069.2 L1835 1068 Z" fill="#fff" stroke-width="0.8"/>
   <path d="M1838.8 1062.8 H1843.4 V1073.4"/>
  </g>
  <!-- notification -->
  <path d="M1870 1045.6 H1892.4 V1062.6 H1879 L1874.6 1067 V1062.6 H1870 Z" fill="#fff" stroke="none"/>
  <path d="M1873.6 1050 H1888.8 M1873.6 1053.8 H1888.8 M1873.6 1057.6 H1884" stroke="#1f2430" stroke-width="1.2"/>
  <circle cx="1887.6" cy="1063.6" r="10.2" fill="#1f2430" stroke="#8e9197" stroke-width="1.2"/>
  <path d="M1884.2 1059.8 H1889.4 V1068.6" stroke-width="1.3"/>
 </g>
 <!-- bluetooth -->
 <rect x="1576.8" y="1045" width="15" height="19.6" rx="7.5" fill="#0a84ff"/>
 <path d="M1580.6 1050.6 L1587.8 1058 L1584.2 1061.4 V1048.2 L1587.8 1051.6 L1580.6 1059" stroke="#fff" stroke-width="1.2"/>
</svg>
<!--TASKBAR_END-->

<!--WATERMARK_START--><!-- watermark -->
<svg style="left:0;top:0" width="1920" height="1080" viewBox="0 0 1920 1080">
 <g opacity="0.46" fill="none" stroke="#c9c9c9" stroke-linecap="round">
  <path d="M883.8 958 V996 A16.3 16.3 0 1 1 869 979.8" stroke-width="10.4"/>
  <path d="M874 1007.2 H1040" stroke-width="11" stroke-linecap="butt"/>
  <circle cx="921.6" cy="990.6" r="15.3" stroke-width="9.8"/>
  <circle cx="1053.5" cy="997.7" r="16.1" stroke-width="10.1"/>
  <path d="M960.6 1005 L963.2 994.6 M981.4 1005 L984 994.6 M998.2 1005 L1001 990 M1014.6 1005 L1017.2 987.4" stroke-width="10.4"/>
  <g fill="#c9c9c9" stroke="none">
   <circle cx="913.5" cy="959" r="6.5"/><circle cx="929.8" cy="959" r="6.5"/>
   <circle cx="954.1" cy="973" r="6.5"/><circle cx="970.4" cy="973" r="6.5"/>
  </g>
 </g>
</svg>
<!--WATERMARK_END-->

<div class="a" style="left:0;top:138px;width:1920px;height:6px;background:linear-gradient(rgba(0,0,0,0.11),rgba(0,0,0,0))"></div>
<!-- ===== TEXT ===== -->
<span class="t" style="left:123.68px;top:17.41px;font-size:16.00px;color:#ffffff;transform:scaleX(0.9262);">new tas; • Last saved: 10/2/2025 at 3:36 PM</span>
<span class="t" style="left:831.19px;top:11.53px;font-size:19.20px;color:#2f4b4a;transform:scaleX(0.8578);">Search</span>
<span class="t" style="left:1580.53px;top:14.14px;font-size:15.27px;color:#ffffff;transform:scaleX(0.9712);">Mohamed Elsaied</span>
<span class="t" style="left:27.52px;top:53.31px;font-size:19.27px;color:#252423;transform:scaleX(0.8806);">File</span>
<span class="t" style="left:100.82px;top:52.51px;font-size:19.27px;color:#252423;transform:scaleX(0.9199);font-weight:700;">Home</span>
<span class="t" style="left:187.70px;top:53.31px;font-size:19.27px;color:#252423;transform:scaleX(0.8977);">Insert</span>
<span class="t" style="left:270.35px;top:53.31px;font-size:19.27px;color:#252423;transform:scaleX(0.9660);">Modeling</span>
<span class="t" style="left:384.86px;top:53.31px;font-size:19.27px;color:#252423;transform:scaleX(0.8728);">View</span>
<span class="t" style="left:459.00px;top:53.31px;font-size:19.27px;color:#252423;transform:scaleX(0.9498);">Optimize</span>
<span class="t" style="left:568.40px;top:53.31px;font-size:19.27px;color:#252423;transform:scaleX(0.9662);">Help</span>
<span class="t" style="left:433.49px;top:104.69px;font-size:18.91px;color:#c8c6c4;transform:scaleX(0.9071);">Sensitivity</span>
<span class="t" style="left:597.15px;top:105.41px;font-size:18.91px;color:#252423;transform:scaleX(0.9090);">Publish</span>
<span class="t" style="left:727.41px;top:105.32px;font-size:18.62px;color:#252423;transform:scaleX(0.9549);">Prep data for AI</span>
<span class="t" style="left:914.09px;top:105.32px;font-size:18.62px;color:#252423;transform:scaleX(0.9877);">Copilot</span>
<span class="t" style="left:1846.73px;top:54.78px;font-size:15.56px;color:#ffffff;transform:scaleX(0.9141);">Share</span>
<span class="t" style="left:650.49px;top:151.29px;font-size:42.91px;color:#ffffff;transform:scaleX(0.9582);font-weight:700;font-style:italic;">Financial Dashboard Analysis</span>
<span class="t" style="left:1497.86px;top:145.49px;font-size:17.45px;color:#ffffff;transform:scaleX(0.8735);font-weight:700;">Year</span>
<span class="t" style="left:1500.89px;top:180.68px;font-size:16.00px;color:#ffffff;transform:scaleX(0.9118);">2006</span>
<span class="t" style="left:654.49px;top:225.06px;font-size:23.64px;color:#ffffff;transform:scaleX(0.8448);font-weight:700;font-style:italic;">Total Revenue</span>
<span class="t" style="left:1020.33px;top:224.69px;font-size:22.55px;color:#ffffff;transform:scaleX(0.8904);font-weight:700;font-style:italic;">Total Expenditures</span>
<span class="t" style="left:1428.52px;top:222.77px;font-size:22.91px;color:#ffffff;transform:scaleX(0.8864);font-weight:700;font-style:italic;">Net Income</span>
<span class="t" style="left:602.41px;top:279.01px;font-size:18.91px;color:#252423;transform:scaleX(0.8451);font-weight:700;">CY</span>
<div style="position:absolute;left:595px;top:325.5px;width:35px;height:14.5px;overflow:hidden"><span class="t" style="left:7.00px;top:-7.76px;font-size:18.91px;color:#252423;transform:scaleX(0.6694);font-weight:700;">LY</span></div>
<span class="t" style="left:588.08px;top:375.43px;font-size:19.27px;color:#252423;transform:scaleX(0.8309);font-weight:700;">YOY %</span>
<span class="t" style="left:995.93px;top:281.96px;font-size:18.18px;color:#252423;transform:scaleX(0.8697);font-weight:700;">CY</span>
<span class="t" style="left:1002.51px;top:323.06px;font-size:18.18px;color:#252423;transform:scaleX(0.8717);font-weight:700;">LY</span>
<span class="t" style="left:980.98px;top:380.42px;font-size:19.27px;color:#252423;transform:scaleX(0.8349);font-weight:700;">YOY %</span>
<span class="t" style="left:1367.43px;top:284.46px;font-size:18.18px;color:#252423;transform:scaleX(0.8697);font-weight:700;">CY</span>
<span class="t" style="left:1374.01px;top:326.06px;font-size:18.18px;color:#252423;transform:scaleX(0.8717);font-weight:700;">LY</span>
<span class="t" style="left:1352.46px;top:382.89px;font-size:18.91px;color:#252423;transform:scaleX(0.8510);font-weight:700;">YOY %</span>
<span class="t" style="left:734.34px;top:270.89px;font-size:40.00px;color:#252423;transform:scaleX(0.8897);">$33.19M</span>
<span class="t" style="left:734.05px;top:321.36px;font-size:38.91px;color:#252423;transform:scaleX(0.9326);">$11.13M</span>
<span class="t" style="left:715.27px;top:367.11px;font-size:40.00px;color:#14f05a;transform:scaleX(0.8711);-webkit-text-stroke:0.6px #14f05a;">198.07%</span>
<span class="t" style="left:1108.43px;top:267.38px;font-size:39.27px;color:#252423;transform:scaleX(0.8993);">$26.2M</span>
<span class="t" style="left:1112.14px;top:320.02px;font-size:38.91px;color:#252423;transform:scaleX(0.9212);">$8.57M</span>
<span class="t" style="left:1097.69px;top:362.16px;font-size:40.00px;color:#14f05a;transform:scaleX(0.9008);-webkit-text-stroke:0.6px #14f05a;">205.58%</span>
<span class="t" style="left:1479.41px;top:271.11px;font-size:38.91px;color:#252423;transform:scaleX(0.9115);">$6.99M</span>
<span class="t" style="left:1482.95px;top:321.36px;font-size:38.91px;color:#252423;transform:scaleX(0.9212);">$2.56M</span>
<span class="t" style="left:1471.61px;top:366.74px;font-size:38.91px;color:#14f05a;transform:scaleX(0.8987);-webkit-text-stroke:0.6px #14f05a;">172.93%</span>
<span class="t" style="left:701.85px;top:445.30px;font-size:19.27px;color:#252423;transform:scaleX(0.8972);font-weight:700;font-style:italic;">CY &amp; LY (Revenue)</span>
<span class="t" style="left:569.55px;top:480.00px;font-size:16.36px;color:#605e5c;transform:scaleX(0.8804);">Actual Revenue</span>
<span class="t" style="left:691.43px;top:480.00px;font-size:16.36px;color:#605e5c;transform:scaleX(0.8786);">LY Actual Revenue</span>
<span class="t" style="left:782.28px;top:518.32px;font-size:13.82px;color:#605e5c;transform:scaleX(0.9490);">$12.0M</span>
<span class="t" style="left:882.21px;top:588.99px;font-size:13.67px;color:#605e5c;transform:scaleX(0.9540);">$9.4M</span>
<span class="t" style="left:918.90px;top:665.00px;font-size:13.67px;color:#605e5c;transform:scaleX(0.9665);">$6.7M</span>
<span class="t" style="left:689.12px;top:680.10px;font-size:13.67px;color:#605e5c;transform:scaleX(0.9665);">$6.2M</span>
<span class="t" style="left:592.82px;top:698.43px;font-size:13.75px;color:#605e5c;transform:scaleX(0.9614);">$5.6M</span>
<span class="t" style="left:822.36px;top:730.93px;font-size:13.67px;color:#605e5c;transform:scaleX(0.9600);">$4.4M</span>
<span class="t" style="left:616.02px;top:885.04px;font-size:13.67px;color:#605e5c;transform:scaleX(0.9863);">Qtr 1</span>
<span class="t" style="left:712.49px;top:885.04px;font-size:13.67px;color:#605e5c;transform:scaleX(1.0118);">Qtr 2</span>
<span class="t" style="left:808.38px;top:885.04px;font-size:13.67px;color:#605e5c;transform:scaleX(0.9941);">Qtr 3</span>
<span class="t" style="left:905.48px;top:885.04px;font-size:13.67px;color:#605e5c;transform:scaleX(0.9785);">Qtr 4</span>
<span class="t" style="left:748.75px;top:905.50px;font-size:16.73px;color:#252423;transform:scaleX(0.9692);-webkit-text-stroke:0.3px #252423;">Quarter</span>
<span class="t" style="left:1257.03px;top:447.30px;font-size:19.27px;color:#252423;transform:scaleX(0.8943);font-weight:700;font-style:italic;">CY &amp; LY (Revenue)</span>
<span class="t" style="left:1049.55px;top:481.50px;font-size:16.36px;color:#605e5c;transform:scaleX(0.8804);">Actual Revenue</span>
<span class="t" style="left:1171.43px;top:481.50px;font-size:16.36px;color:#605e5c;transform:scaleX(0.8786);">LY Actual Revenue</span>
<span class="t" style="left:1051.94px;top:546.38px;font-size:13.96px;color:#605e5c;transform:scaleX(0.9482);">Canadian Division</span>
<span class="t" style="left:1044.61px;top:593.49px;font-size:13.96px;color:#605e5c;transform:scaleX(0.9684);">Southwest Division</span>
<span class="t" style="left:1064.32px;top:641.42px;font-size:13.96px;color:#605e5c;transform:scaleX(0.9584);">Central Division</span>
<span class="t" style="left:1048.32px;top:688.45px;font-size:13.96px;color:#605e5c;transform:scaleX(0.9751);">Northeast Division</span>
<span class="t" style="left:1044.82px;top:736.46px;font-size:13.96px;color:#605e5c;transform:scaleX(0.9880);">Northwest Division</span>
<span class="t" style="left:1048.48px;top:783.49px;font-size:13.96px;color:#605e5c;transform:scaleX(0.9465);">Southeast Division</span>
<span class="t" style="left:1118.84px;top:831.55px;font-size:13.96px;color:#605e5c;transform:scaleX(0.9212);">France</span>
<span class="t" style="left:1104.13px;top:879.12px;font-size:13.96px;color:#605e5c;transform:scaleX(0.9265);">Germany</span>
<span class="t" style="left:1586.44px;top:536.44px;font-size:13.82px;color:#605e5c;transform:scaleX(0.9564);">$9.4M</span>
<span class="t" style="left:1302.46px;top:555.94px;font-size:13.82px;color:#605e5c;transform:scaleX(0.9700);">$2.9M</span>
<span class="t" style="left:1486.37px;top:584.53px;font-size:13.82px;color:#605e5c;transform:scaleX(0.9363);">$7.1M</span>
<span class="t" style="left:1288.03px;top:602.14px;font-size:13.82px;color:#605e5c;transform:scaleX(0.9499);">$2.5M</span>
<span class="t" style="left:1386.38px;top:631.52px;font-size:13.82px;color:#605e5c;transform:scaleX(0.9440);">$4.8M</span>
<span class="t" style="left:1247.14px;top:650.13px;font-size:13.82px;color:#605e5c;transform:scaleX(0.9499);">$1.6M</span>
<span class="t" style="left:1357.46px;top:679.45px;font-size:13.82px;color:#605e5c;transform:scaleX(0.9564);">$4.2M</span>
<span class="t" style="left:1217.96px;top:697.01px;font-size:13.82px;color:#605e5c;transform:scaleX(0.9564);">$0.9M</span>
<span class="t" style="left:1321.60px;top:726.48px;font-size:13.82px;color:#605e5c;transform:scaleX(0.9564);">$3.3M</span>
<span class="t" style="left:1237.78px;top:745.01px;font-size:13.82px;color:#605e5c;transform:scaleX(0.9564);">$1.4M</span>
<span class="t" style="left:1316.45px;top:774.44px;font-size:13.82px;color:#605e5c;transform:scaleX(0.9363);">$3.2M</span>
<span class="t" style="left:1252.92px;top:793.08px;font-size:13.82px;color:#605e5c;transform:scaleX(0.9564);">$1.7M</span>
<span class="t" style="left:1227.28px;top:821.52px;font-size:13.82px;color:#605e5c;transform:scaleX(0.9499);">$1.2M</span>
<span class="t" style="left:1178.53px;top:869.56px;font-size:13.82px;color:#605e5c;transform:scaleX(0.9564);">$0.0M</span>
<span class="t" style="left:235.88px;top:970.66px;font-size:17.09px;color:#252423;transform:scaleX(0.7983);-webkit-text-stroke:0.3px #252423;">Page 1</span>
<span class="t" style="left:4.46px;top:1009.32px;font-size:15.64px;color:#484644;transform:scaleX(0.9348);">Page 1 of 1</span>
<span class="t" style="left:1584.36px;top:1006.63px;font-size:15.42px;color:#605e5c;transform:scaleX(0.9369);">90%</span>
<span class="t" style="left:1674.56px;top:1008.40px;font-size:15.71px;color:#484644;transform:scaleX(0.9579);">Update available (click to download)</span>
<span class="t" style="left:1428.10px;top:1046.17px;font-size:17.31px;color:#d6d6d6;transform:scaleX(0.8799);">Desktop</span>
<span class="t" style="left:1789.75px;top:1036.26px;font-size:15.56px;color:#ffffff;transform:scaleX(0.9196);">06:39</span>
<span class="t" style="left:842.30px;top:1018.82px;font-size:37.67px;color:rgba(201,201,201,0.46);transform:scaleX(1.0075);font-weight:700;">mostaql.com</span>
</body>
</html>
